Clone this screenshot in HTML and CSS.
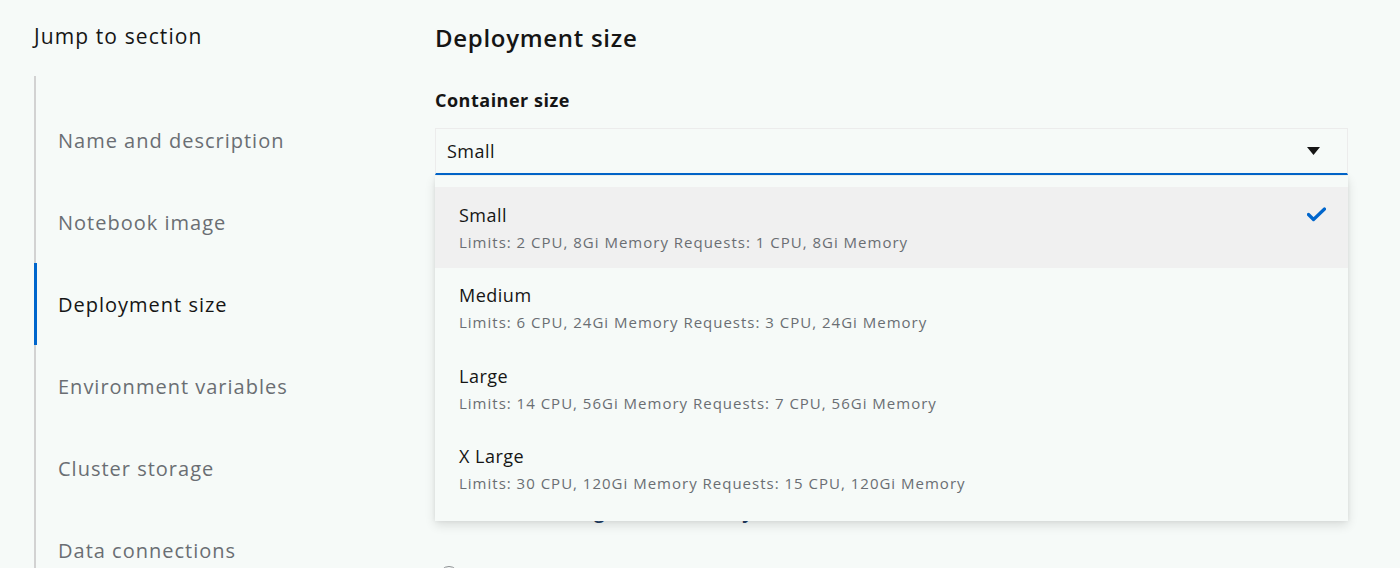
FILE: index.html
```html
<!DOCTYPE html>
<html lang="en">
<head>
<meta charset="utf-8">
<title>Deployment size</title>
<link rel="stylesheet" href="styles.css">
</head>
<body>
<div class="page">
  <aside class="jump">
    <div class="jump-title">Jump to section</div>
    <ul class="jump-list">
      <li class="jump-item">Name and description</li>
      <li class="jump-item">Notebook image</li>
      <li class="jump-item is-current">Deployment size</li>
      <li class="jump-item">Environment variables</li>
      <li class="jump-item">Cluster storage</li>
      <li class="jump-item">Data connections</li>
    </ul>
  </aside>

  <main class="form">
    <h2 class="section-title">Deployment size</h2>
    <div class="field">
      <div class="field-label">Container size</div>
      <div class="select">
        <button class="select-toggle" type="button">
          <span class="select-value">Small</span>
          <svg class="caret" width="13" height="8" viewBox="0 0 13 8" aria-hidden="true"><path d="M0 0h13L6.5 8z" fill="#151515"/></svg>
        </button>
        <ul class="select-menu">
          <li class="option is-selected">
            <div class="option-main">
              <div class="option-name">Small</div>
              <div class="option-desc">Limits: 2 CPU, 8Gi Memory Requests: 1 CPU, 8Gi Memory</div>
            </div>
            <svg class="check" width="19" height="15" viewBox="0 0 19 15" aria-hidden="true"><path d="M1.5 7.5l5 5L17.5 2" fill="none" stroke="#0066cc" stroke-width="3.2" stroke-linecap="round" stroke-linejoin="round"/></svg>
          </li>
          <li class="option">
            <div class="option-main">
              <div class="option-name">Medium</div>
              <div class="option-desc">Limits: 6 CPU, 24Gi Memory Requests: 3 CPU, 24Gi Memory</div>
            </div>
          </li>
          <li class="option">
            <div class="option-main">
              <div class="option-name">Large</div>
              <div class="option-desc">Limits: 14 CPU, 56Gi Memory Requests: 7 CPU, 56Gi Memory</div>
            </div>
          </li>
          <li class="option">
            <div class="option-main">
              <div class="option-name">X Large</div>
              <div class="option-desc">Limits: 30 CPU, 120Gi Memory Requests: 15 CPU, 120Gi Memory</div>
            </div>
          </li>
        </ul>
      </div>
    </div>
    <div class="field under">
      <div class="under-link">View settings and summary</div>
    </div>
    <div class="radio-row">
      <span class="radio"></span>
    </div>
  </main>
</div>
</body>
</html>
```
FILE: styles.css
```css
* { box-sizing: border-box; }

html, body {
  margin: 0;
  height: 100%;
  overflow: hidden;
}

body {
  background: #f6faf8;
  color: #151515;
  font-family: "Open Sans", "Noto Sans", sans-serif;
}

.page {
  display: flex;
  padding: 24px 0 0 34px;
}

/* jump links */
.jump {
  width: 401px;
  flex: none;
}

.jump-title {
  font-size: 21px;
  line-height: 24px;
  letter-spacing: 1.1px;
  color: #151515;
}

.jump-list {
  list-style: none;
  margin: 28px 0 0;
  padding: 23px 0 0;
  border-left: 2px solid #d2d2d2;
}

.jump-item {
  position: relative;
  height: 82px;
  display: flex;
  align-items: center;
  padding-left: 22px;
  font-size: 20px;
  letter-spacing: 1px;
  color: #6a6e73;
}

.jump-item.is-current {
  color: #151515;
}

.jump-item.is-current::before {
  content: "";
  position: absolute;
  left: -2px;
  top: 0;
  bottom: 0;
  width: 3px;
  background: #0066cc;
}

/* form */
.form {
  width: 913px;
  flex: none;
}

.section-title {
  margin: -1px 0 0;
  font-size: 24px;
  line-height: 30px;
  font-weight: 600;
  letter-spacing: 0.7px;
}

.field {
  margin-top: 35px;
}

.field-label {
  font-size: 18px;
  line-height: 24px;
  font-weight: 700;
  letter-spacing: 0.5px;
  margin-bottom: 16px;
}

.select {
  position: relative;
}

.select-toggle {
  display: flex;
  align-items: center;
  justify-content: space-between;
  width: 100%;
  height: 47px;
  padding: 0 27px 0 11px;
  background: transparent;
  border: 1px solid #ececec;
  border-bottom: 2px solid #0066cc;
  font: inherit;
  font-size: 18px;
  letter-spacing: 0.5px;
  color: #151515;
  text-align: left;
}

.select-menu {
  position: absolute;
  z-index: 2;
  left: 0;
  right: 0;
  top: 48px;
  margin: 0;
  padding: 11px 0 12px;
  list-style: none;
  background: #f6faf8;
  box-shadow: 0 4px 10px rgba(3, 3, 3, 0.12), 0 0 4px rgba(3, 3, 3, 0.06);
}

.option {
  height: 80.5px;
  display: flex;
  align-items: center;
  justify-content: space-between;
  padding: 0 22px 0 24px;
}

.option.is-selected {
  background: #f0f0f0;
}

.option-name {
  font-size: 18px;
  line-height: 24px;
  letter-spacing: 0.5px;
  color: #151515;
}

.option-desc {
  margin-top: 5px;
  font-size: 15px;
  line-height: 20px;
  letter-spacing: 1px;
  color: #6a6e73;
}

.check {
  margin-top: -26px;
}

/* content sitting under the open menu */
.under {
  margin-top: 325px;
}

.under-link {
  padding-left: 50px;
  font-size: 18px;
  line-height: 24px;
  font-weight: 700;
  letter-spacing: 0.8px;
  color: #1f3d63;
}

.radio-row {
  margin-top: 42px;
}

.radio {
  display: inline-block;
  width: 20px;
  height: 20px;
  margin-left: 4px;
  border-radius: 50%;
  border: 1px solid #8a8d90;
}
```
